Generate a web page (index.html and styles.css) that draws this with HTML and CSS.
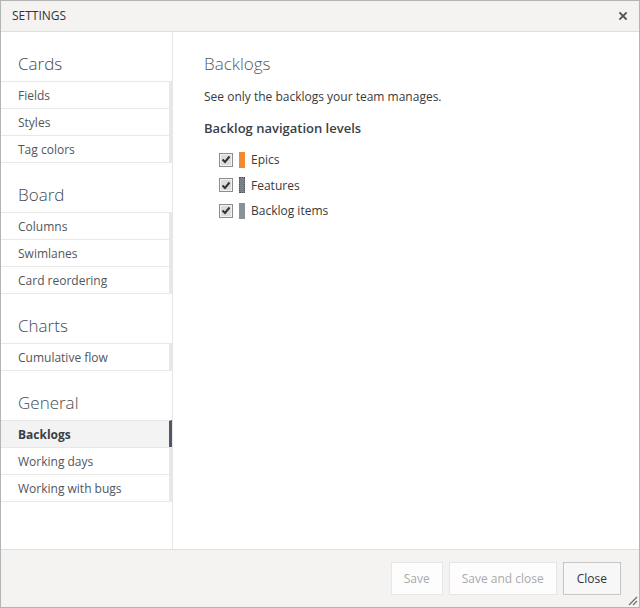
FILE: index.html
```html
<!DOCTYPE html>
<html lang="en">
<head>
<meta charset="utf-8">
<title>Settings</title>
<link rel="stylesheet" href="styles.css">
</head>
<body>
<div class="dialog">
  <div class="titlebar">
    <span class="title">SETTINGS</span>
    <span class="close-x" aria-label="Close">
      <svg width="8" height="8" viewBox="0 0 8 8"><path d="M1 1 L7 7 M7 1 L1 7" stroke="#50555c" stroke-width="1.8" stroke-linecap="square"/></svg>
    </span>
  </div>
  <div class="main">
    <nav class="nav">
      <div class="section">
        <div class="section-title">Cards</div>
        <ul class="items">
          <li class="item">Fields</li>
          <li class="item">Styles</li>
          <li class="item">Tag colors</li>
        </ul>
      </div>
      <div class="section">
        <div class="section-title">Board</div>
        <ul class="items">
          <li class="item">Columns</li>
          <li class="item">Swimlanes</li>
          <li class="item">Card reordering</li>
        </ul>
      </div>
      <div class="section">
        <div class="section-title">Charts</div>
        <ul class="items">
          <li class="item">Cumulative flow</li>
        </ul>
      </div>
      <div class="section">
        <div class="section-title">General</div>
        <ul class="items">
          <li class="item selected">Backlogs</li>
          <li class="item">Working days</li>
          <li class="item">Working with bugs</li>
        </ul>
      </div>
    </nav>
    <section class="content">
      <h1 class="page-title">Backlogs</h1>
      <p class="desc">See only the backlogs your team manages.</p>
      <h2 class="sub-title">Backlog navigation levels</h2>
      <ul class="levels">
        <li class="level">
          <span class="check"><svg width="10" height="9" viewBox="0 0 10 9"><path d="M1.5 4.5 L4 7 L8.5 1.5" fill="none" stroke="#2f3338" stroke-width="2"/></svg></span>
          <span class="bar bar-epic"></span>
          <span class="label">Epics</span>
        </li>
        <li class="level">
          <span class="check"><svg width="10" height="9" viewBox="0 0 10 9"><path d="M1.5 4.5 L4 7 L8.5 1.5" fill="none" stroke="#2f3338" stroke-width="2"/></svg></span>
          <span class="bar bar-feature"></span>
          <span class="label">Features</span>
        </li>
        <li class="level">
          <span class="check"><svg width="10" height="9" viewBox="0 0 10 9"><path d="M1.5 4.5 L4 7 L8.5 1.5" fill="none" stroke="#2f3338" stroke-width="2"/></svg></span>
          <span class="bar bar-item"></span>
          <span class="label">Backlog items</span>
        </li>
      </ul>
    </section>
  </div>
  <div class="footer">
    <button class="btn" disabled>Save</button>
    <button class="btn" disabled>Save and close</button>
    <button class="btn btn-primary">Close</button>
  </div>
  <span class="grip">
    <svg width="12" height="12" viewBox="0 0 12 12"><path d="M11 3 L3 11 M11 7 L7 11" stroke="#6a6e74" stroke-width="1.2"/></svg>
  </span>
</div>
</body>
</html>
```
FILE: styles.css
```css
* { box-sizing: border-box; }
html, body { margin: 0; padding: 0; }
body {
  font-family: "Segoe UI", "Open Sans", "Noto Sans", sans-serif;
  color: #333;
  background: #fff;
}
.dialog {
  position: relative;
  width: 640px;
  height: 608px;
  border: 1px solid #b4b4b4;
  display: flex;
  flex-direction: column;
  background: #fff;
}
.titlebar {
  height: 31px;
  flex: none;
  background: #f4f3f2;
  border-bottom: 1px solid #e0dfde;
  display: flex;
  align-items: center;
  justify-content: space-between;
  padding: 0 12px 0 11px;
}
.title {
  font-size: 12px;
  color: #333;
  line-height: 16px;
}
.close-x { display: flex; }
.main {
  flex: 1;
  display: flex;
  min-height: 0;
}
.nav {
  width: 172px;
  flex: none;
  border-right: 1px solid #e6e6e6;
}
.section-title {
  height: 49px;
  padding-top: 20px;
  padding-left: 17px;
  font-size: 17px;
  line-height: 24px;
  font-weight: 300;
  color: #454b53;
}
.items {
  list-style: none;
  margin: 0;
  padding: 0;
}
.item {
  height: 27px;
  border-top: 1px solid #e8e8e8;
  border-right: 3px solid #e8e8e8;
  padding-left: 17px;
  font-size: 12px;
  line-height: 27px;
  color: #51565c;
}
.item:last-child { border-bottom: 1px solid #e8e8e8; height: 28px; }
.item.selected {
  background: #f3f3f3;
  font-weight: 700;
  color: #3a3f46;
  border-right-color: #4f5866;
}
.content {
  flex: 1;
  padding: 20px 31px;
}
.page-title {
  margin: 0;
  font-size: 17px;
  line-height: 24px;
  font-weight: 300;
  color: #555a61;
}
.desc {
  margin: 12px 0 0;
  font-size: 12px;
  line-height: 18px;
  color: #3a3a3a;
}
.sub-title {
  margin: 13px 0 0;
  font-size: 13px;
  line-height: 18px;
  font-weight: 600;
  color: #3a3f46;
}
.levels {
  list-style: none;
  margin: 10px 0 0;
  padding: 0 0 0 15px;
}
.level {
  height: 25.5px;
  display: flex;
  align-items: center;
}
.check {
  width: 14px;
  height: 14px;
  border: 1px solid #8c8c8c;
  background: #dcdcdc;
  box-shadow: inset 0 0 0 1px #f2f2f2;
  display: flex;
  align-items: center;
  justify-content: center;
  flex: none;
}
.bar {
  width: 6px;
  height: 16px;
  margin-left: 6px;
  flex: none;
}
.bar-epic { background: #f0892f; }
.bar-feature { background: #7b8088; border: 1px dotted #50555c; }
.bar-item { background: #8b9199; }
.label {
  margin-left: 6px;
  font-size: 12px;
  color: #3a3a3a;
}
.footer {
  height: 58px;
  flex: none;
  background: #f4f3f2;
  border-top: 1px solid #dedede;
  display: flex;
  align-items: center;
  justify-content: flex-end;
  gap: 6px;
  padding: 0 18px 0 0;
}
.btn {
  height: 33px;
  padding: 0 12px;
  font-family: inherit;
  font-size: 12px;
  background: #fdfdfd;
  border: 1px solid #e6e6e6;
  color: #aaa;
  border-radius: 0;
}
.btn-primary {
  background: #f7f7f7;
  border-color: #c6c6c6;
  color: #333;
  padding: 0 13px;
}
.grip {
  position: absolute;
  right: 1px;
  bottom: 1px;
  display: flex;
}
```
